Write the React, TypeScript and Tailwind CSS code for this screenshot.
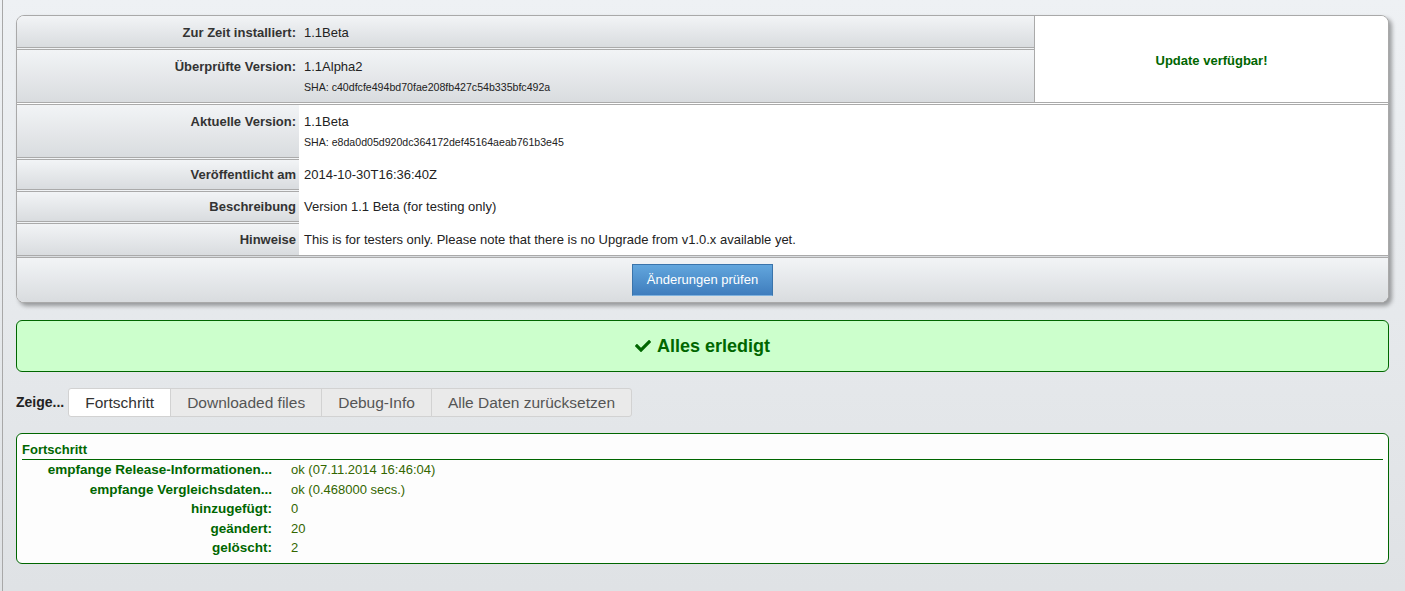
import { FaCheck } from "react-icons/fa";

const gray = "bg-gradient-to-b from-[#f2f4f6] to-[#d9dcdf]";

const details = [
  { label: "Veröffentlicht am", value: "2014-10-30T16:36:40Z" },
  { label: "Beschreibung", value: "Version 1.1 Beta (for testing only)" },
  {
    label: "Hinweise",
    value: "This is for testers only. Please note that there is no Upgrade from v1.0.x available yet.",
  },
];

const progress = [
  ["empfange Release-Informationen...", "ok (07.11.2014 16:46:04)"],
  ["empfange Vergleichsdaten...", "ok (0.468000 secs.)"],
  ["hinzugefügt:", "0"],
  ["geändert:", "20"],
  ["gelöscht:", "2"],
];

const tabs = ["Fortschritt", "Downloaded files", "Debug-Info", "Alle Daten zurücksetzen"];

export default function App() {
  return (
    <div className="min-h-[591px] bg-gradient-to-b from-[#eef1f4] to-[#dfe2e5] font-['Liberation_Sans',Arial,sans-serif] text-[13px] text-[#333]">
      <div className="ml-[2px] min-h-[591px] border-l border-[#a8a8a8] pl-[13px] pr-[16px] pt-[15px]">
        {/* version card */}
        <div className="overflow-hidden rounded-[8px] border border-[#a9a9a9] bg-white shadow-[3px_3px_4px_rgba(0,0,0,0.35)]">
          <div className="flex border-b-[3px] border-double border-[#aaa]">
            <div className="flex-1">
              <div className={`flex h-[34px] items-center border-b-[3px] border-double border-[#aaa] pt-[2px] ${gray}`}>
                <div className="w-[282px] pr-[3px] text-right font-bold">Zur Zeit installiert:</div>
                <div className="pl-[5px] text-[#222]">1.1Beta</div>
              </div>
              <div className={`flex h-[52px] pt-[9px] ${gray}`}>
                <div className="w-[282px] pr-[3px] text-right font-bold leading-[16px]">Überprüfte Version:</div>
                <div className="pl-[5px] text-[#222]">
                  <div className="leading-[16px]">1.1Alpha2</div>
                  <div className="mt-[5px] text-[10.6px] leading-[14px]">SHA: c40dfcfe494bd70fae208fb427c54b335bfc492a</div>
                </div>
              </div>
            </div>
            <div className="flex w-[354px] items-center justify-center border-l border-[#aaa] bg-white pt-[4px] font-bold text-[#006600]">
              Update verfügbar!
            </div>
          </div>

          <div className="flex h-[55px]">
            <div className={`w-[282px] border-b-[3px] border-double border-[#aaa] pr-[3px] pt-[9px] text-right font-bold leading-[16px] ${gray}`}>
              Aktuelle Version:
            </div>
            <div className="pl-[5px] pt-[9px] text-[#222]">
              <div className="leading-[16px]">1.1Beta</div>
              <div className="mt-[5px] text-[10.6px] leading-[14px]">SHA: e8da0d05d920dc364172def45164aeab761b3e45</div>
            </div>
          </div>

          {details.map((d, i) => {
            const last = i === details.length - 1;
            return (
              <div key={d.label} className={`flex ${last ? "h-[31px]" : "h-[32px]"}`}>
                <div
                  className={`flex w-[282px] items-center justify-end pr-[3px] font-bold ${gray} ${
                    last ? "" : "border-b-[3px] border-double border-[#aaa]"
                  }`}
                >
                  {d.label}
                </div>
                <div className={`flex items-center pl-[5px] text-[#222] ${last ? "" : "pb-[3px]"}`}>{d.value}</div>
              </div>
            );
          })}

          <div className={`flex justify-center border-t-[3px] border-double border-[#aaa] py-[6px] ${gray}`}>
            <button className="h-[32px] w-[141px] border border-[#3a74ab] border-b-[#7fb2de] bg-gradient-to-b from-[#62a6dd] to-[#3f7dbd] text-[13px] text-white">
              Änderungen prüfen
            </button>
          </div>
        </div>

        {/* status */}
        <div className="mt-[17px] flex h-[52px] items-center justify-center gap-[6px] rounded-[6px] border border-[#006600] bg-[#ccffcc] text-[18px] font-bold text-[#006600]">
          <FaCheck className="h-[16px] w-[16px]" />
          <span>Alles erledigt</span>
        </div>

        {/* tabs */}
        <div className="mt-[16px] flex items-center gap-[4px]">
          <span className="text-[14px] font-bold text-[#222]">Zeige...</span>
          <div className="flex">
            {tabs.map((t, i) => (
              <div
                key={t}
                className={`flex h-[29px] items-center border border-[#d2d2d2] px-[16px] text-[15.5px] ${
                  i === 0 ? "rounded-l-[3px] bg-white text-[#333]" : "-ml-px bg-[#eaeaea] text-[#555]"
                } ${i === tabs.length - 1 ? "rounded-r-[3px]" : ""}`}
              >
                {t}
              </div>
            ))}
          </div>
        </div>

        {/* progress */}
        <div className="mt-[16px] rounded-[6px] border border-[#006600] bg-[#fdfdfd] px-[5px] pb-[5px] pt-[8px]">
          <div className="border-b border-[#006600] pb-[1px] font-bold leading-[16px] text-[#006600]">Fortschritt</div>
          <div>
            {progress.map(([l, v]) => (
              <div key={l} className="flex leading-[19.5px]">
                <div className="w-[250px] text-right text-[13.5px] font-bold text-[#006600]">{l}</div>
                <div className="pl-[19px] text-[#336600]">{v}</div>
              </div>
            ))}
          </div>
        </div>
      </div>
    </div>
  );
}
